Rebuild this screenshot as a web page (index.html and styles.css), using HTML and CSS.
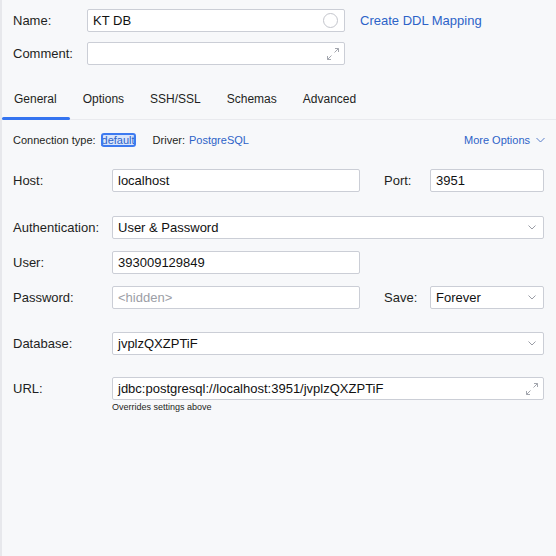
FILE: index.html
```html
<!DOCTYPE html>
<html>
<head>
<meta charset="utf-8">
<link rel="stylesheet" href="styles.css">
</head>
<body>
<div class="panel">
  <div class="top">
    <div class="row">
      <span class="lbl top-lbl">Name:</span>
      <div class="field top-field"><span class="val">KT DB</span><span class="circle"></span></div>
      <a class="link ddl">Create DDL Mapping</a>
    </div>
    <div class="row">
      <span class="lbl top-lbl">Comment:</span>
      <div class="field top-field"><span class="val"></span>
        <svg class="expand" width="14" height="14" viewBox="0 0 14 14"><path d="M9 1.5H12.5V5M12.5 1.5L8.5 5.5M1.5 9V12.5H5M1.5 12.5L5.5 8.5" fill="none" stroke="#a3a6ae" stroke-width="1"/></svg>
      </div>
    </div>
  </div>

  <div class="tabs">
    <div class="tab active">General</div>
    <div class="tab">Options</div>
    <div class="tab">SSH/SSL</div>
    <div class="tab">Schemas</div>
    <div class="tab">Advanced</div>
  </div>

  <div class="conn">
    <span>Connection type:</span>
    <span class="focus-link">default</span>
    <span class="driver">Driver:</span>
    <span class="link">PostgreSQL</span>
    <span class="link more">More Options
      <svg width="9" height="6" viewBox="0 0 9 6"><path d="M0.5 1L4.5 5L8.5 1" fill="none" stroke="#5b7fc9" stroke-width="1"/></svg>
    </span>
  </div>

  <div class="form">
    <div class="frow r-host">
      <span class="lbl">Host:</span>
      <div class="field half"><span class="val">localhost</span></div>
      <span class="lbl side-lbl">Port:</span>
      <div class="field side"><span class="val">3951</span></div>
    </div>
    <div class="frow r-auth">
      <span class="lbl">Authentication:</span>
      <div class="field wide"><span class="val">User &amp; Password</span>
        <svg class="chev" width="8" height="5" viewBox="0 0 8 5"><path d="M0.5 0.5L4 4L7.5 0.5" fill="none" stroke="#9a9da6" stroke-width="1"/></svg>
      </div>
    </div>
    <div class="frow r-user">
      <span class="lbl">User:</span>
      <div class="field half"><span class="val">393009129849</span></div>
    </div>
    <div class="frow r-pass">
      <span class="lbl">Password:</span>
      <div class="field half"><span class="val ph">&lt;hidden&gt;</span></div>
      <span class="lbl side-lbl">Save:</span>
      <div class="field side"><span class="val">Forever</span>
        <svg class="chev" width="8" height="5" viewBox="0 0 8 5"><path d="M0.5 0.5L4 4L7.5 0.5" fill="none" stroke="#9a9da6" stroke-width="1"/></svg>
      </div>
    </div>
    <div class="frow r-db">
      <span class="lbl">Database:</span>
      <div class="field wide"><span class="val">jvplzQXZPTiF</span>
        <svg class="chev" width="8" height="5" viewBox="0 0 8 5"><path d="M0.5 0.5L4 4L7.5 0.5" fill="none" stroke="#9a9da6" stroke-width="1"/></svg>
      </div>
    </div>
    <div class="frow r-url">
      <span class="lbl">URL:</span>
      <div class="field wide"><span class="val">jdbc:postgresql://localhost:3951/jvplzQXZPTiF</span>
        <svg class="expand" width="14" height="14" viewBox="0 0 14 14"><path d="M9 1.5H12.5V5M12.5 1.5L8.5 5.5M1.5 9V12.5H5M1.5 12.5L5.5 8.5" fill="none" stroke="#a3a6ae" stroke-width="1"/></svg>
      </div>
    </div>
    <div class="hint">Overrides settings above</div>
  </div>
</div>
</body>
</html>
```

FILE: styles.css
```css
html, body {
  margin: 0;
  padding: 0;
}
body {
  background: #f7f8fa;
  font-family: "Liberation Sans", Arial, sans-serif;
  color: #1e1f22;
}
.panel {
  border-left: 2px solid #e7e8ec;
  min-height: 556px;
  box-sizing: border-box;
}
.top {
  padding: 9px 0 0 11px;
  display: flex;
  flex-direction: column;
  gap: 10px;
}
.row {
  display: flex;
  align-items: center;
}
.lbl {
  font-size: 13px;
  width: 99px;
  flex: none;
}
.top-lbl {
  width: 74px;
}
.field {
  display: flex;
  align-items: center;
  height: 23px;
  box-sizing: border-box;
  border: 1px solid #cbced6;
  border-radius: 2px;
  background: #fff;
  padding: 0 5px;
  font-size: 13px;
  color: #111;
  flex: none;
}
.val {
  flex: 1;
  white-space: nowrap;
}
.ph {
  color: #9c9ea6;
}
.top-field {
  width: 258px;
}
.circle {
  width: 13px;
  height: 13px;
  border: 1px solid #c3c5cc;
  border-radius: 50%;
  margin-right: 1px;
}
.expand {
  display: block;
  margin-right: -1px;
}
.link {
  color: #2d63c8;
  font-size: 13px;
}
.ddl {
  margin-left: 15px;
}
.tabs {
  margin-top: 14px;
  display: flex;
  height: 40px;
  border-bottom: 1px solid #e9eaee;
}
.tab {
  position: relative;
  font-size: 12px;
  padding: 0 13.5px 0 12px;
  display: flex;
  align-items: center;
}
.tab + .tab {
  padding-left: 12.5px;
}
.tab.active::after {
  content: "";
  position: absolute;
  left: 0;
  right: 0;
  bottom: -1px;
  height: 3px;
  border-radius: 2px;
  background: #3574f0;
}
.conn {
  margin-top: 10px;
  height: 20px;
  display: flex;
  align-items: center;
  padding: 0 11px 0 11px;
  font-size: 11px;
}
.conn .link {
  font-size: 11px;
}
.focus-link {
  margin-left: 6px;
  padding: 0;
  color: #2d63c8;
  text-decoration: underline;
  background: #d9e5fb;
  outline: 2px solid #3d7af0;
  outline-offset: -1px;
  border-radius: 2px;
  line-height: 12px;
}
.driver {
  margin-left: 18px;
  margin-right: 4px;
}
.more {
  margin-left: auto;
  display: flex;
  align-items: center;
  gap: 6px;
}
.form {
  padding: 19px 12px 0 11px;
  display: flex;
  flex-direction: column;
}
.frow {
  display: flex;
  align-items: center;
}
.half {
  width: 248px;
}
.side-lbl {
  width: 46px;
  margin-left: 24px;
}
.side {
  flex: 1;
}
.wide {
  flex: 1;
}
.chev {
  display: block;
  margin-right: 2px;
}
.r-auth { margin-top: 24px; }
.r-user { margin-top: 12px; }
.r-pass { margin-top: 12px; }
.r-db { margin-top: 23px; }
.r-url { margin-top: 22px; }
.hint {
  margin-top: 2px;
  margin-left: 99px;
  font-size: 9px;
  line-height: 11px;
}
```
